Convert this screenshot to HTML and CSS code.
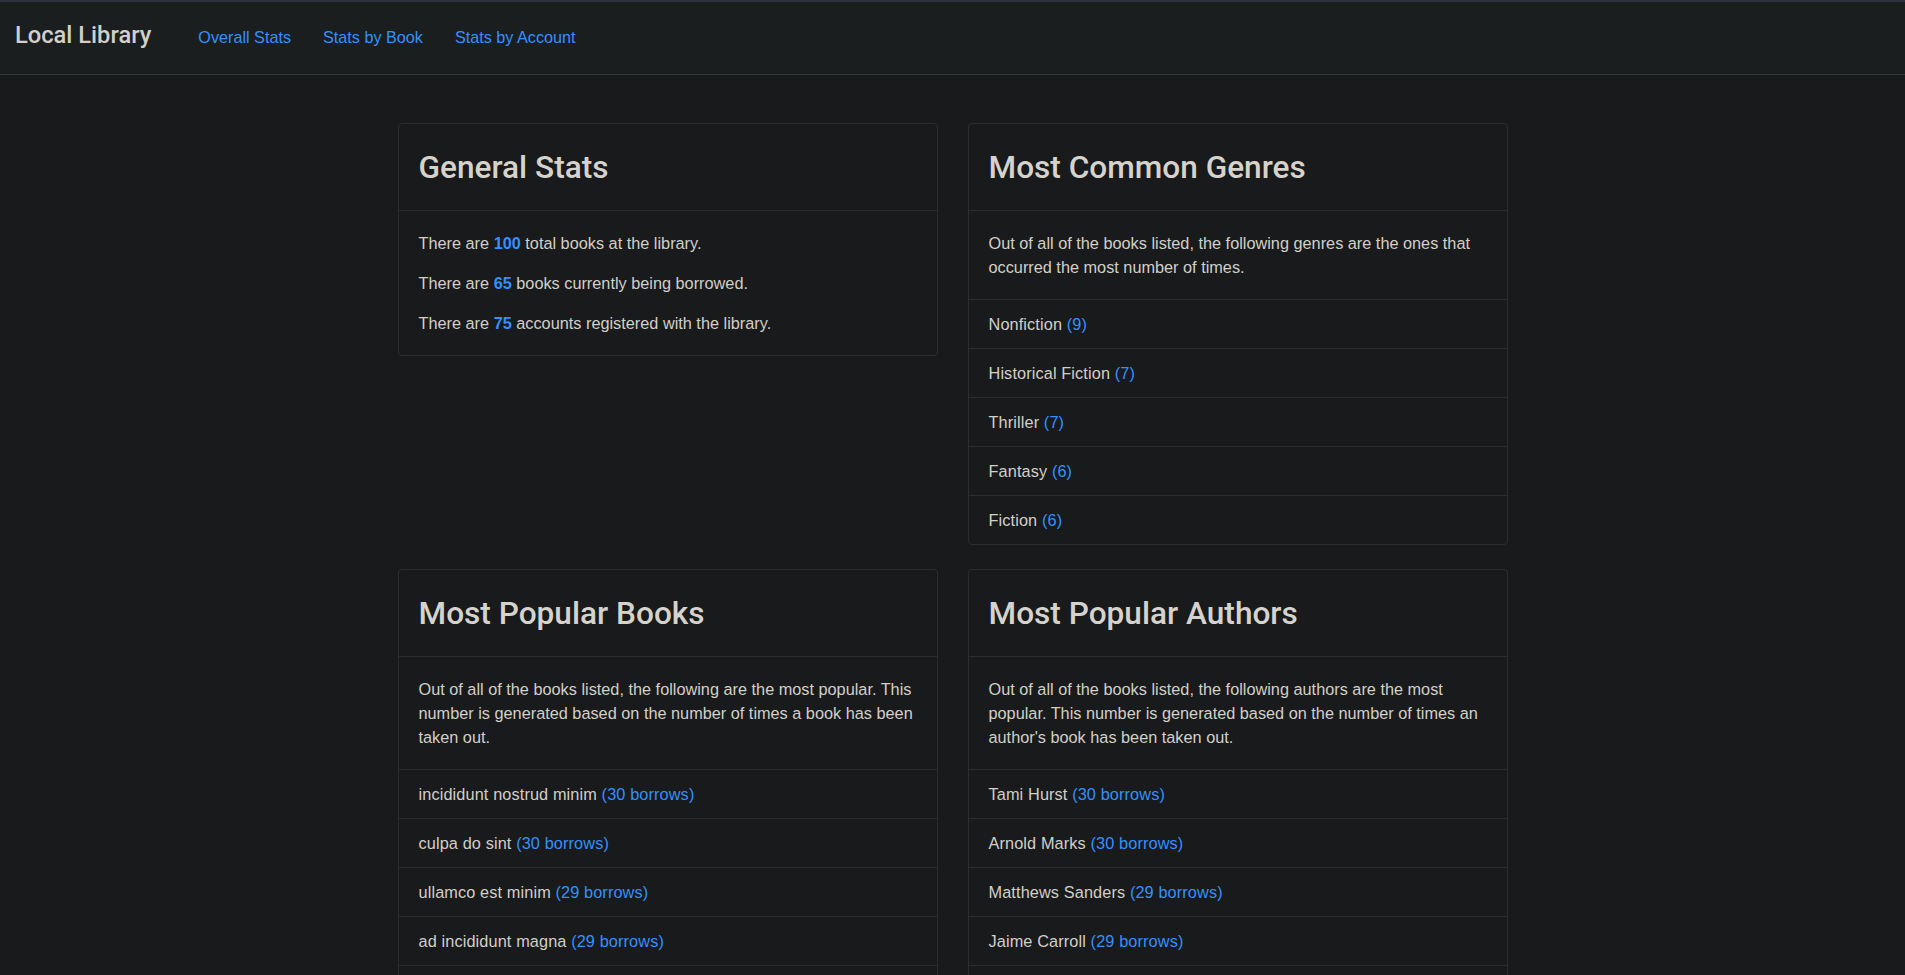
FILE: index.html
```html
<!DOCTYPE html>
<html lang="en">
<head>
<meta charset="utf-8">
<title>Local Library</title>
<link rel="stylesheet" href="styles.css">
</head>
<body>
<nav class="navbar">
  <a class="brand" href="#">Local Library</a>
  <ul class="nav">
    <li><a class="nav-link" href="#">Overall Stats</a></li>
    <li><a class="nav-link" href="#">Stats by Book</a></li>
    <li><a class="nav-link" href="#">Stats by Account</a></li>
  </ul>
</nav>
<main class="container">
  <div class="grid">
    <section class="card">
      <div class="card-header"><h2>General Stats</h2></div>
      <div class="card-body">
        <p>There are <strong class="num">100</strong> total books at the library.</p>
        <p>There are <strong class="num">65</strong> books currently being borrowed.</p>
        <p>There are <strong class="num">75</strong> accounts registered with the library.</p>
      </div>
    </section>
    <section class="card">
      <div class="card-header"><h2>Most Common Genres</h2></div>
      <div class="card-body">
        <p>Out of all of the books listed, the following genres are the ones that occurred the most number of times.</p>
      </div>
      <ul class="list">
        <li>Nonfiction <span class="count">(9)</span></li>
        <li>Historical Fiction <span class="count">(7)</span></li>
        <li>Thriller <span class="count">(7)</span></li>
        <li>Fantasy <span class="count">(6)</span></li>
        <li>Fiction <span class="count">(6)</span></li>
      </ul>
    </section>
    <section class="card">
      <div class="card-header"><h2>Most Popular Books</h2></div>
      <div class="card-body">
        <p>Out of all of the books listed, the following are the most popular. This number is generated based on the number of times a book has been taken out.</p>
      </div>
      <ul class="list">
        <li>incididunt nostrud minim <span class="count">(30 borrows)</span></li>
        <li>culpa do sint <span class="count">(30 borrows)</span></li>
        <li>ullamco est minim <span class="count">(29 borrows)</span></li>
        <li>ad incididunt magna <span class="count">(29 borrows)</span></li>
        <li>velit eu est <span class="count">(28 borrows)</span></li>
      </ul>
    </section>
    <section class="card">
      <div class="card-header"><h2>Most Popular Authors</h2></div>
      <div class="card-body">
        <p>Out of all of the books listed, the following authors are the most popular. This number is generated based on the number of times an author's book has been taken out.</p>
      </div>
      <ul class="list">
        <li>Tami Hurst <span class="count">(30 borrows)</span></li>
        <li>Arnold Marks <span class="count">(30 borrows)</span></li>
        <li>Matthews Sanders <span class="count">(29 borrows)</span></li>
        <li>Jaime Carroll <span class="count">(29 borrows)</span></li>
        <li>Susan Sherman <span class="count">(28 borrows)</span></li>
      </ul>
    </section>
  </div>
</main>
</body>
</html>
```

FILE: styles.css
```css
html {
  scrollbar-width: none;
}
* {
  box-sizing: border-box;
}
body {
  margin: 0;
  background: #181a1b;
  color: #d3cfc9;
  font-family: "Liberation Sans", Arial, sans-serif;
  font-size: 16px;
  line-height: 24px;
}
a {
  text-decoration: none;
}
.navbar {
  display: flex;
  align-items: baseline;
  height: 75px;
  padding: 16px 15px 0;
  background: #1b1e1f;
  border-top: 2px solid #2f3240;
  border-bottom: 1px solid #34373a;
}
.brand {
  color: #d3cfc9;
  font-family: Roboto, "Liberation Sans", sans-serif;
  font-weight: 500;
  font-size: 23.7px;
  line-height: 1.5;
  margin-right: 31px;
}
.nav {
  display: flex;
  list-style: none;
  margin: 0;
  padding: 0;
}
.nav-link {
  display: block;
  padding: 0 16px;
  color: #3391ff;
  font-size: 16.2px;
  line-height: 24px;
}
.container {
  width: 1140px;
  margin: 0 auto;
  padding: 48px 15px 40px;
}
.grid {
  display: grid;
  grid-template-columns: 1fr 1fr;
  column-gap: 30px;
  row-gap: 24px;
  align-items: start;
}
.card {
  background: #181a1b;
  border: 1px solid #2b2e30;
  border-radius: 4px;
  overflow: hidden;
}
.card-header {
  padding: 25px 20px 23px;
  border-bottom: 1px solid #2b2e30;
}
.card-header h2 {
  margin: 0;
  font-family: Roboto, "Liberation Sans", sans-serif;
  font-size: 31.6px;
  line-height: 38px;
  font-weight: 500;
  color: #d6d2cc;
}
.card-body {
  padding: 20px 18px 20px 20px;
  font-size: 16.3px;
}
.card-body p {
  margin: 0 0 16px;
}
.card-body p:last-child {
  margin-bottom: 0;
}
.num {
  color: #3391ff;
  font-weight: 700;
}
.list {
  list-style: none;
  margin: 0;
  padding: 0;
}
.list li {
  border-top: 1px solid #2b2e30;
  padding: 12px 20px;
  font-size: 16.3px;
  line-height: 24px;
  letter-spacing: 0.12px;
}
.count {
  color: #3391ff;
}
```
